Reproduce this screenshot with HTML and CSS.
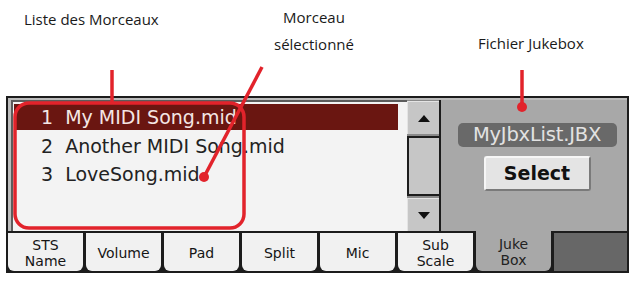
FILE: index.html
```html
<!DOCTYPE html>
<html lang="fr">
<head>
<meta charset="utf-8">
<title>Jukebox</title>
<link rel="stylesheet" href="styles.css">
</head>
<body>
<div class="page">
  <div class="screen">
    <div class="main">
      <div class="list">
        <div class="row sel">1&nbsp; My MIDI Song.mid</div>
        <div class="row">2&nbsp; Another MIDI Song.mid</div>
        <div class="row">3&nbsp; LoveSong.mid</div>
      </div>
      <div class="scroll">
        <div class="sbtn"><svg width="12" height="7" viewBox="0 0 12 7"><polygon points="6,0 12,7 0,7" fill="#111"/></svg></div>
        <div class="thumb"></div>
        <div class="sbtn"><svg width="12" height="7" viewBox="0 0 12 7"><polygon points="0,0 12,0 6,7" fill="#111"/></svg></div>
      </div>
      <div class="panel">
        <div class="file">MyJbxList.JBX</div>
        <div class="select">Select</div>
      </div>
    </div>
    <div class="tabs">
      <div class="tab two">STS<br>Name</div>
      <div class="tab">Volume</div>
      <div class="tab">Pad</div>
      <div class="tab">Split</div>
      <div class="tab">Mic</div>
      <div class="tab two">Sub<br>Scale</div>
      <div class="tab two active">Juke<br>Box</div>
      <div class="filler"></div>
    </div>
  </div>

  <div class="callouts">
    <div class="label l1">Liste des Morceaux</div>
    <div class="label l2">Morceau<br>sélectionné</div>
    <div class="label l3">Fichier Jukebox</div>
    <svg class="marks" width="634" height="281" viewBox="0 0 634 281">
      <g stroke="#e2232b" fill="none" stroke-width="3.5">
        <line x1="112" y1="70" x2="112" y2="103"/>
        <rect x="15" y="103" width="229" height="125" rx="14"/>
        <line x1="262" y1="67" x2="204" y2="177"/>
        <line x1="522" y1="70" x2="522" y2="106"/>
      </g>
      <g fill="#e2232b">
        <circle cx="204" cy="177" r="5"/>
        <circle cx="522" cy="107" r="5"/>
      </g>
    </svg>
  </div>
</div>
</body>
</html>
```

FILE: styles.css
```css
html, body {
  margin: 0;
  padding: 0;
  background: #ffffff;
}

.page {
  position: relative;
  width: 634px;
  height: 281px;
  overflow: hidden;
}

.screen {
  margin: 96px 0 0 6px;
  width: 623px;
  height: 177px;
  box-sizing: border-box;
  border: 2px solid #1c1c1c;
  background: #1c1c1c;
  display: flex;
  flex-direction: column;
  font-family: "DejaVu Sans", sans-serif;
}

.main {
  height: 133px;
  display: flex;
  background: #bcbcbc;
  box-sizing: border-box;
  padding: 2px 0 0 3px;
}

.list {
  flex: 1;
  background: #f3f3f3;
  border-left: 2px solid #5c5c5c;
  border-top: 2px solid #5c5c5c;
  padding: 2px 9px 0 1px;
  box-sizing: border-box;
}

.row {
  height: 28px;
  line-height: 28px;
  font-size: 19px;
  color: #222;
  padding-left: 27px;
  white-space: nowrap;
}

.row.sel {
  height: 26px;
  line-height: 26px;
  background: #6a1611;
  color: #f4e6e4;
  margin-bottom: 2px;
}

.scroll {
  width: 34px;
  display: flex;
  flex-direction: column;
  box-sizing: border-box;
  border-right: 2px solid #1c1c1c;
  background: #8a8a8a;
  padding-top: 1px;
}

.sbtn {
  height: 33px;
  background: #c6c6c6;
  border-top: 1px solid #e4e4e4;
  border-left: 1px solid #e4e4e4;
  display: flex;
  align-items: center;
  justify-content: center;
  box-sizing: border-box;
}

.thumb {
  flex: 1;
  margin: 2px 0;
  background: #c6c6c6;
  border-top: 2px solid #1c1c1c;
  border-left: 2px solid #1c1c1c;
  border-bottom: 2px solid #1c1c1c;
}

.panel {
  width: 186px;
  background: #a8a8a8;
  display: flex;
  flex-direction: column;
  align-items: center;
  padding-left: 6px;
  box-sizing: border-box;
}

.file {
  margin-top: 23px;
  width: 159px;
  height: 24px;
  line-height: 24px;
  border-radius: 5px;
  background: #696969;
  color: #e2e2e2;
  font-size: 19.5px;
  letter-spacing: -0.2px;
  text-align: center;
}

.select {
  margin-top: 9px;
  width: 107px;
  height: 35px;
  line-height: 31px;
  box-sizing: border-box;
  background: #e4e4e4;
  border-top: 2px solid #f6f6f6;
  border-left: 2px solid #f6f6f6;
  border-right: 2px solid #7a7a7a;
  border-bottom: 2px solid #7a7a7a;
  border-radius: 3px;
  font-weight: bold;
  font-size: 19px;
  color: #111;
  text-align: center;
}

.tabs {
  flex: 1;
  display: flex;
  gap: 3px;
  padding-top: 2px;
  background: #1c1c1c;
}

.tab {
  width: 75px;
  background: #f1f1f1;
  border-radius: 0 0 6px 6px;
  display: flex;
  align-items: center;
  justify-content: center;
  text-align: center;
  font-size: 14px;
  line-height: 16px;
  color: #151515;
  padding-top: 1px;
  box-sizing: border-box;
}

.tab.active {
  background: #a8a8a8;
  margin-top: -2px;
  color: #222;
}

.filler {
  flex: 1;
  background: #676767;
}

.callouts {
  position: absolute;
  left: 0;
  top: 0;
  width: 634px;
  height: 281px;
  pointer-events: none;
}

.marks {
  position: absolute;
  left: 0;
  top: 0;
}

.label {
  position: absolute;
  font-family: "Open Sans", "Noto Sans", sans-serif;
  font-size: 15px;
  color: #1a1a1a;
  text-align: center;
  line-height: 27px;
  white-space: nowrap;
}

.l1 { left: 24px; top: 6px; }
.l2 { left: 268px; top: 4px; width: 92px; }
.l3 { left: 478px; top: 30px; }
```
